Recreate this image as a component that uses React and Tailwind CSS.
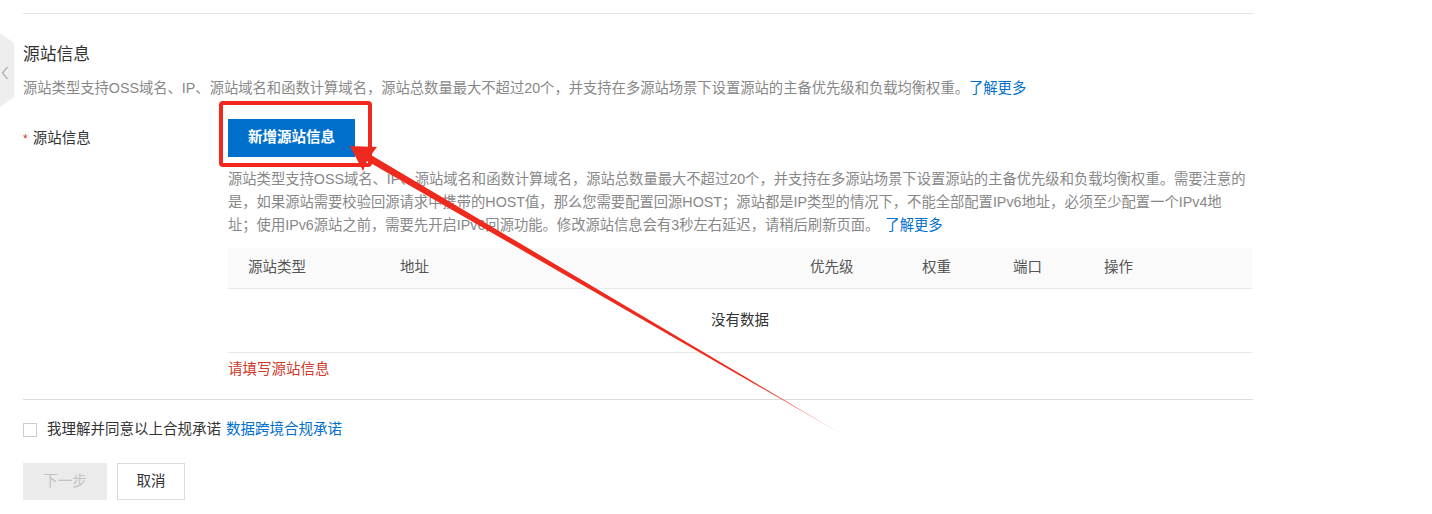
import React from "react";

export default function App() {
  const cols = "grid grid-cols-[152px_410px_112px_91px_91px_1fr] px-[20px]";
  return (
    <div className="relative w-[1432px] h-[514px] bg-white overflow-hidden font-['Liberation_Sans','Noto_Sans_CJK_SC',sans-serif] text-[#333]">
      {/* side tab */}
      <svg className="absolute left-0 top-[33px]" width="16" height="78" viewBox="0 0 16 78">
        <path d="M0 0 L14 10 L14 64 L0 74 Z" fill="#eeeeee" />
        <path d="M7.5 34 L2.5 40 L7.5 46" fill="none" stroke="#b4b4b4" strokeWidth="1.4" />
      </svg>

      <div className="pl-[23px] w-[1253px]">
        <div className="h-[14px] border-b border-[#e3e3e3]" />
        <h2 className="mt-[29px] text-[16.8px] leading-[24px] text-[#333]">源站信息</h2>
        <p className="mt-[9px] text-[14.3px] leading-[24px] text-[#888] whitespace-nowrap">
          源站类型支持OSS域名、IP、源站域名和函数计算域名，源站总数量最大不超过20个，并支持在多源站场景下设置源站的主备优先级和负载均衡权重。
          <span className="text-[#0070cc]">了解更多</span>
        </p>

        <div className="mt-[19px] flex">
          <div className="w-[205px] text-[14.5px] leading-[38px] text-[#333]">
            <span className="text-[#d93026] mr-[5px] text-[12px]">*</span>源站信息
          </div>
          <div className="w-[1024px]">
            <div className="relative inline-block align-top">
              <div className="absolute -left-[9px] -top-[18px] -right-[17px] -bottom-[10px] border-[4px] border-[#f0281d] rounded-[4px]" />
              <button className="relative block h-[38px] w-[127px] bg-[#0070cc] text-white font-bold text-[14.5px]">
                新增源站信息
              </button>
            </div>
            <p className="mt-[11px] text-[14.3px] leading-[23px] text-[#888] whitespace-nowrap">
              源站类型支持OSS域名、IP、源站域名和函数计算域名，源站总数量最大不超过20个，并支持在多源站场景下设置源站的主备优先级和负载均衡权重。需要注意的
              <br />
              是，如果源站需要校验回源请求中携带的HOST值，那么您需要配置回源HOST；源站都是IP类型的情况下，不能全部配置IPv6地址，必须至少配置一个IPv4地
              <br />
              址；使用IPv6源站之前，需要先开启IPv6回源功能。修改源站信息会有3秒左右延迟，请稍后刷新页面。
              <span className="ml-[6px] text-[#0070cc]">了解更多</span>
            </p>
            <div className="mt-[11px] text-[14.5px]">
              <div className={`${cols} h-[41px] items-center bg-[#fafafa] border-b border-[#e8e8e8] text-[#555]`}>
                <span>源站类型</span>
                <span>地址</span>
                <span>优先级</span>
                <span>权重</span>
                <span>端口</span>
                <span>操作</span>
              </div>
              <div className="h-[64px] flex items-center justify-center border-b border-[#e8e8e8] text-[#333]">
                没有数据
              </div>
            </div>
            <div className="mt-[6px] text-[14.5px] leading-[20px] text-[#d0392b]">请填写源站信息</div>
          </div>
        </div>

        <div className="mt-[20px] border-t border-[#dcdcdc]" />

        <div className="mt-[20px] h-[20px] flex items-center text-[14.5px]">
          <span className="w-[14px] h-[14px] border border-[#cccccc] bg-white" />
          <span className="ml-[10px] text-[#333]">我理解并同意以上合规承诺</span>
          <span className="ml-[5px] text-[#0070cc]">数据跨境合规承诺</span>
        </div>

        <div className="mt-[23px] flex gap-[10px] text-[14.5px]">
          <button className="h-[37px] w-[84px] bg-[#ebebeb] text-[#c2c2c2]">下一步</button>
          <button className="h-[37px] w-[68px] bg-white border border-[#dadada] text-[#333]">取消</button>
        </div>
      </div>

      {/* annotation arrow */}
      <svg className="absolute inset-0 pointer-events-none" width="1432" height="514">
        <defs>
          <linearGradient id="fade" x1="350" y1="147" x2="845" y2="436" gradientUnits="userSpaceOnUse">
            <stop offset="0" stopColor="#ee2a1e" />
            <stop offset="0.8" stopColor="#ee2a1e" />
            <stop offset="1" stopColor="#ee2a1e" stopOpacity="0.2" />
          </linearGradient>
        </defs>
        <polygon
          points="350,146 377,147 371,155 845,436 367,161 363,171"
          fill="url(#fade)"
        />
      </svg>
    </div>
  );
}
